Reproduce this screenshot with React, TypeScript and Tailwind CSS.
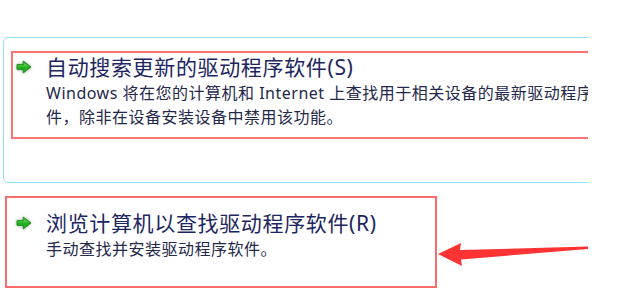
const font = { fontFamily: '"Noto Sans", "Noto Sans CJK SC", sans-serif' };

function GoArrow() {
  return (
    <svg width="16" height="14" viewBox="0 0 16 14" className="shrink-0 drop-shadow-[0_0_1.5px_rgba(0,0,0,0.4)]">
      <path
        d="M1 4.6 H7.2 V1 L15 7 L7.2 13 V9.4 H1 Z"
        fill="#22ad22"
        stroke="#138a13"
        strokeWidth="0.8"
        strokeLinejoin="round"
      />
      <path d="M1.6 5.2 H7.8 V2.4 L13.4 6.6 H1.6 Z" fill="#5fd44f" opacity="0.7" />
    </svg>
  );
}

interface OptionProps {
  title: string;
  lines: string[];
}

function Option({ title, lines }: OptionProps) {
  return (
    <div className="flex">
      <div className="pl-[1px] pt-[7px] w-[31px] shrink-0">
        <GoArrow />
      </div>
      <div className="min-w-0">
        <div className="text-[21px] leading-[28px] tracking-[0.65px] text-[#1d2660] whitespace-nowrap">
          {title}
        </div>
        {lines.map((line) => (
          <div
            key={line}
            className="text-[16px] leading-[24px] tracking-[0.5px] text-[#24284a] whitespace-nowrap"
          >
            {line}
          </div>
        ))}
      </div>
    </div>
  );
}

export default function App() {
  return (
    <div className="relative w-[617px] h-[306px] bg-white overflow-hidden" style={font}>
      <div className="w-[588px] overflow-hidden pt-[37px]">
        <div className="ml-[3px] w-[640px] h-[146px] border border-[#8fdff7] rounded-[5px] pt-[13px] pl-[7px]">
          <div className="h-[88px] border-2 border-[#fb7474] pl-[2px] pt-0 overflow-hidden">
            <Option
              title="自动搜索更新的驱动程序软件(S)"
              lines={[
                'Windows 将在您的计算机和 Internet 上查找用于相关设备的最新驱动程序软',
                '件，除非在设备安装设备中禁用该功能。',
              ]}
            />
          </div>
        </div>
        <div className="mt-[13px] ml-[5px] w-[432px] h-[92px] border-2 border-[#fb6d6d] pl-[8px] pt-[11px]">
          <Option title="浏览计算机以查找驱动程序软件(R)" lines={['手动查找并安装驱动程序软件。']} />
        </div>
      </div>

      <svg
        className="absolute left-0 top-0 pointer-events-none"
        width="617"
        height="306"
        viewBox="0 0 617 306"
      >
        <path
          d="M438 254 L461 243 L460 250 L588 246.5 L588 249 L461 259.5 L462 266 Z"
          fill="#fe3434"
        />
      </svg>
    </div>
  );
}
